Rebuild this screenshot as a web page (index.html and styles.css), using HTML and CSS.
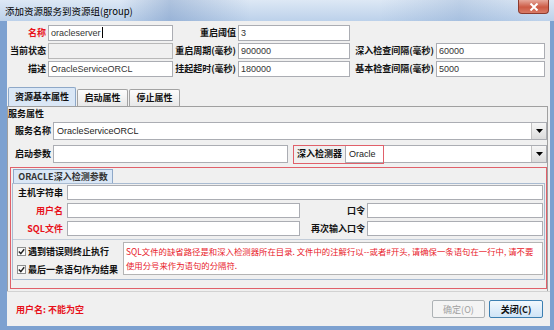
FILE: index.html
```html
<!DOCTYPE html>
<html>
<head>
  <title>添加资源服务到资源组(group)</title>
  <link rel="stylesheet" href="styles.css">
</head>
<body>
  <div class="window">
    <div class="titlebar">
      <span class="title">添加资源服务到资源组(group)</span>
      <div class="close-button">
        <svg width="10" height="8" viewBox="0 0 10 8"><path d="M1.5 0.5 L8.5 7.5 M8.5 0.5 L1.5 7.5" stroke="#fff" stroke-width="2"/></svg>
      </div>
    </div>
    <div class="frame">
      <div class="content">
        <div class="top-form">
          <span class="lbl required">名称</span>
          <div class="field">oracleserver<span class="caret"></span></div>
          <span class="lbl">重启阈值</span>
          <div class="field">3</div>
          <span></span>
          <span></span>

          <span class="lbl">当前状态</span>
          <div class="field disabled"></div>
          <span class="lbl">重启周期(毫秒)</span>
          <div class="field">900000</div>
          <span class="lbl">深入检查间隔(毫秒)</span>
          <div class="field">60000</div>

          <span class="lbl">描述</span>
          <div class="field">OracleServiceORCL</div>
          <span class="lbl">挂起超时(毫秒)</span>
          <div class="field">180000</div>
          <span class="lbl">基本检查间隔(毫秒)</span>
          <div class="field">5000</div>
        </div>

        <div class="tabs">
          <div class="tab active">资源基本属性</div>
          <div class="tab">启动属性</div>
          <div class="tab">停止属性</div>
        </div>

        <div class="tab-panel">
          <div class="section-title">服务属性</div>

          <div class="svc-row">
            <span class="svc-label">服务名称</span>
            <div class="combo">
              <span class="combo-text">OracleServiceORCL</span>
              <span class="combo-arrow"><svg width="7" height="4" viewBox="0 0 7 4"><polygon points="0,0 7,0 3.5,4" fill="#000"/></svg></span>
            </div>
          </div>

          <div class="svc-row second">
            <span class="svc-label">启动参数</span>
            <div class="field start-args"></div>
            <div class="detector">
              <span class="detector-label">深入检测器</span>
              <div class="combo">
                <span class="combo-text">Oracle</span>
                <span class="combo-arrow"><svg width="7" height="4" viewBox="0 0 7 4"><polygon points="0,0 7,0 3.5,4" fill="#000"/></svg></span>
              </div>
            </div>
          </div>

          <div class="detect-panel">
            <div class="inner-tabs">
              <div class="inner-tab">ORACLE深入检测参数</div>
            </div>
            <div class="inner-panel">
              <div class="param-grid">
                <span class="lbl">主机字符串</span>
                <div class="field wide"></div>

                <span class="lbl required">用户名</span>
                <div class="field"></div>
                <span class="lbl">口令</span>
                <div class="field"></div>

                <span class="lbl required">SQL文件</span>
                <div class="field"></div>
                <span class="lbl">再次输入口令</span>
                <div class="field"></div>
              </div>

              <div class="options">
                <div class="checks">
                  <div class="check">
                    <span class="box"><svg width="7" height="7" viewBox="0 0 7 7"><path d="M0.8 3.6 L2.8 5.6 L6.2 1.2" fill="none" stroke="#222" stroke-width="1.4"/></svg></span>
                    <span>遇到错误则终止执行</span>
                  </div>
                  <div class="check">
                    <span class="box"><svg width="7" height="7" viewBox="0 0 7 7"><path d="M0.8 3.6 L2.8 5.6 L6.2 1.2" fill="none" stroke="#222" stroke-width="1.4"/></svg></span>
                    <span>最后一条语句作为结果</span>
                  </div>
                </div>
                <div class="note">SQL文件的缺省路径是和深入检测器所在目录. 文件中的注解行以--或者#开头, 请确保一条语句在一行中, 请不要<br>使用分号来作为语句的分隔符.</div>
              </div>
            </div>
          </div>
        </div>

        <div class="footer">
          <span class="status">用户名: 不能为空</span>
          <div class="buttons">
            <button class="btn" disabled>确定(O)</button>
            <button class="btn default">关闭(C)</button>
          </div>
        </div>
      </div>
    </div>
  </div>
</body>
</html>
```

FILE: styles.css
```css
body {
  margin: 0;
  width: 554px;
  height: 330px;
  overflow: hidden;
  font-family: "Noto Sans CJK SC", "Noto Sans", sans-serif;
  font-size: 9px;
  color: #111;
  background: #7da1d0;
}
.window {
  width: 554px;
  height: 330px;
  display: flex;
  flex-direction: column;
}
.titlebar {
  height: 21px;
  display: flex;
  align-items: center;
  padding-left: 5px;
  background:
    linear-gradient(90deg, rgba(255,255,255,0) 120px, rgba(70,110,170,0.3) 170px, rgba(255,255,255,0) 250px),
    linear-gradient(90deg, rgba(255,255,255,0) 380px, rgba(90,130,185,0.22) 460px, rgba(255,255,255,0) 540px),
    linear-gradient(to bottom, #dde8f5, #bcd1ea);
}
.title {
  font-size: 9.5px;
  color: #000;
  line-height: 12px;
}
.close-button {
  margin-left: auto;
  margin-right: 5px;
  align-self: flex-start;
  width: 31px;
  height: 14px;
  box-sizing: border-box;
  border: 1px solid #8c3a2d;
  border-top: none;
  border-radius: 0 0 4px 4px;
  background: linear-gradient(to bottom, #e6a89b, #cc5a44 55%, #d97a66);
  display: flex;
  align-items: center;
  justify-content: center;
}
.frame {
  flex: 1;
  border-style: solid;
  border-color: #7da1d0;
  border-width: 0 4px 4px 7px;
  min-height: 0;
}
.content {
  height: 100%;
  background: #f0f0f0;
  display: flex;
  flex-direction: column;
}

/* top form */
.top-form {
  display: grid;
  grid-template-columns: 41px 125px 65px 112px 86px 109px;
  grid-auto-rows: 16px;
  row-gap: 2px;
  padding-top: 4px;
}
.lbl {
  font-weight: bold;
  text-align: right;
  padding-right: 2px;
  line-height: 16px;
  white-space: nowrap;
}
.required {
  color: #e8101a;
}
.field {
  border: 1px solid #abadb3;
  background: #fff;
  box-sizing: border-box;
  font-family: "Liberation Sans", Arial, sans-serif;
  font-size: 9px;
  color: #333;
  padding-left: 2px;
  line-height: 14px;
  white-space: nowrap;
  overflow: hidden;
}
.field.disabled {
  background: #f0f0f0;
  border-color: #b8b8b8;
}
.caret {
  display: inline-block;
  width: 1px;
  height: 11px;
  background: #000;
  vertical-align: -2px;
  margin-left: 1px;
}

/* tabs */
.tabs {
  display: flex;
  align-items: flex-end;
  height: 19px;
  margin-top: 10px;
  padding-left: 1px;
}
.tab {
  height: 17px;
  width: 51px;
  box-sizing: border-box;
  border: 1px solid #a3a3a3;
  border-bottom: none;
  border-radius: 2px 2px 0 0;
  background: linear-gradient(to bottom, #fcfcfc, #e8e8e8);
  font-weight: bold;
  text-align: center;
  line-height: 15px;
  margin-left: 1px;
}
.tab.active {
  height: 19px;
  width: 68px;
  margin-left: 0;
  background: #dae7f6;
  border-color: #8ea8c8;
  line-height: 18px;
}
.tab-panel {
  height: 185px;
  box-sizing: border-box;
  border: 1px solid #a0a0a0;
  border-bottom: none;
  margin-right: 2px;
  display: flex;
  flex-direction: column;
}
.section-title {
  font-weight: bold;
  line-height: 12px;
  margin-top: 1px;
}

/* service rows */
.svc-row {
  display: flex;
  height: 18px;
  margin-top: 2px;
  padding-left: 7px;
}
.svc-row.second {
  margin-top: 5px;
}
.svc-label {
  width: 36px;
  margin-right: 2px;
  font-weight: bold;
  line-height: 18px;
  white-space: nowrap;
}
.combo {
  flex: 1;
  display: flex;
  border: 1px solid #abadb3;
  background: #fff;
  box-sizing: border-box;
}
.combo-text {
  flex: 1;
  font-family: "Liberation Sans", Arial, sans-serif;
  font-size: 9px;
  line-height: 16px;
  padding-left: 3px;
  color: #222;
}
.combo-arrow {
  width: 14px;
  border-left: 1px solid #c2c2c2;
  background: linear-gradient(to bottom, #f6f6f6, #dcdcdc);
  display: flex;
  align-items: center;
  justify-content: center;
}
.field.start-args {
  width: 235px;
  flex: none;
}
.detector {
  flex: 1;
  display: flex;
  margin-left: 5px;
  position: relative;
}
.detector::after {
  content: "";
  position: absolute;
  left: 0;
  top: 0;
  width: 91px;
  height: 19px;
  box-sizing: border-box;
  border: 1px solid #e0606a;
}
.detector-label {
  width: 52px;
  padding-left: 4px;
  box-sizing: border-box;
  font-weight: bold;
  line-height: 18px;
  white-space: nowrap;
}

/* oracle panel */
.detect-panel {
  margin: 4px 0 0 2px;
  height: 122px;
  box-sizing: border-box;
  border: 1px solid #e0606a;
  padding: 1px 1px 0 1px;
}
.inner-tabs {
  display: flex;
  padding-left: 1px;
}
.inner-tab {
  width: 100px;
  height: 14px;
  box-sizing: border-box;
  border: 1px solid #8ea8c8;
  border-bottom: none;
  background: #dae7f6;
  font-weight: bold;
  color: #333;
  line-height: 13px;
  text-align: center;
  white-space: nowrap;
}
.inner-panel {
  height: 97px;
  box-sizing: border-box;
  border: 1px solid #a9bbd1;
}
.param-grid {
  display: grid;
  grid-template-columns: 54px 233px 67px 176px;
  grid-auto-rows: 15px;
  row-gap: 3px;
  padding-top: 1px;
}
.param-grid .lbl {
  line-height: 15px;
}
.param-grid .lbl:first-child {
  padding-right: 4px;
}
.param-grid .lbl.required {
  padding-right: 4px;
}
.field.wide {
  grid-column: 2 / 5;
}
.options {
  display: flex;
  margin-top: 3px;
  border-top: 1px solid #c3cdd9;
  padding: 2px 1px 0 4px;
}
.checks {
  width: 106px;
  display: flex;
  flex-direction: column;
}
.check {
  display: flex;
  align-items: center;
  height: 18px;
  font-weight: bold;
  white-space: nowrap;
}
.box {
  width: 9px;
  height: 9px;
  box-sizing: border-box;
  border: 1px solid #8e8f8f;
  background: linear-gradient(to bottom, #f4f4f4, #ffffff);
  margin-right: 2px;
  display: flex;
  align-items: center;
  justify-content: center;
}
.note {
  flex: 1;
  height: 33px;
  box-sizing: border-box;
  border: 1px solid #b4b4b4;
  background: #fff;
  color: #e8202a;
  font-size: 8.4px;
  line-height: 14px;
  padding: 1px 0 0 2px;
  white-space: nowrap;
  overflow: hidden;
}

/* footer */
.footer {
  flex: 1;
  display: flex;
  align-items: center;
  border-top: 1px solid #d2d2d2;
  padding: 0 7px 0 9px;
}
.status {
  color: #e8101a;
  font-weight: bold;
}
.buttons {
  margin-left: auto;
  display: flex;
  gap: 4px;
}
.btn {
  height: 18px;
  width: 54px;
  font-family: "Noto Sans CJK SC", sans-serif;
  font-size: 9px;
  border: 1px solid #707070;
  border-radius: 2px;
  background: linear-gradient(to bottom, #f4f4f4, #e2e2e2 50%, #d6d6d6);
  color: #111;
  padding: 0;
}
.btn:disabled {
  width: 53px;
  background: #f4f4f4;
  border-color: #adb2b5;
  color: #a0a0a0;
}
.btn.default {
  border-color: #3c7fb1;
  font-weight: bold;
  background: linear-gradient(to bottom, #f2f8fd, #e0eefa 50%, #cfe4f6);
}
```
